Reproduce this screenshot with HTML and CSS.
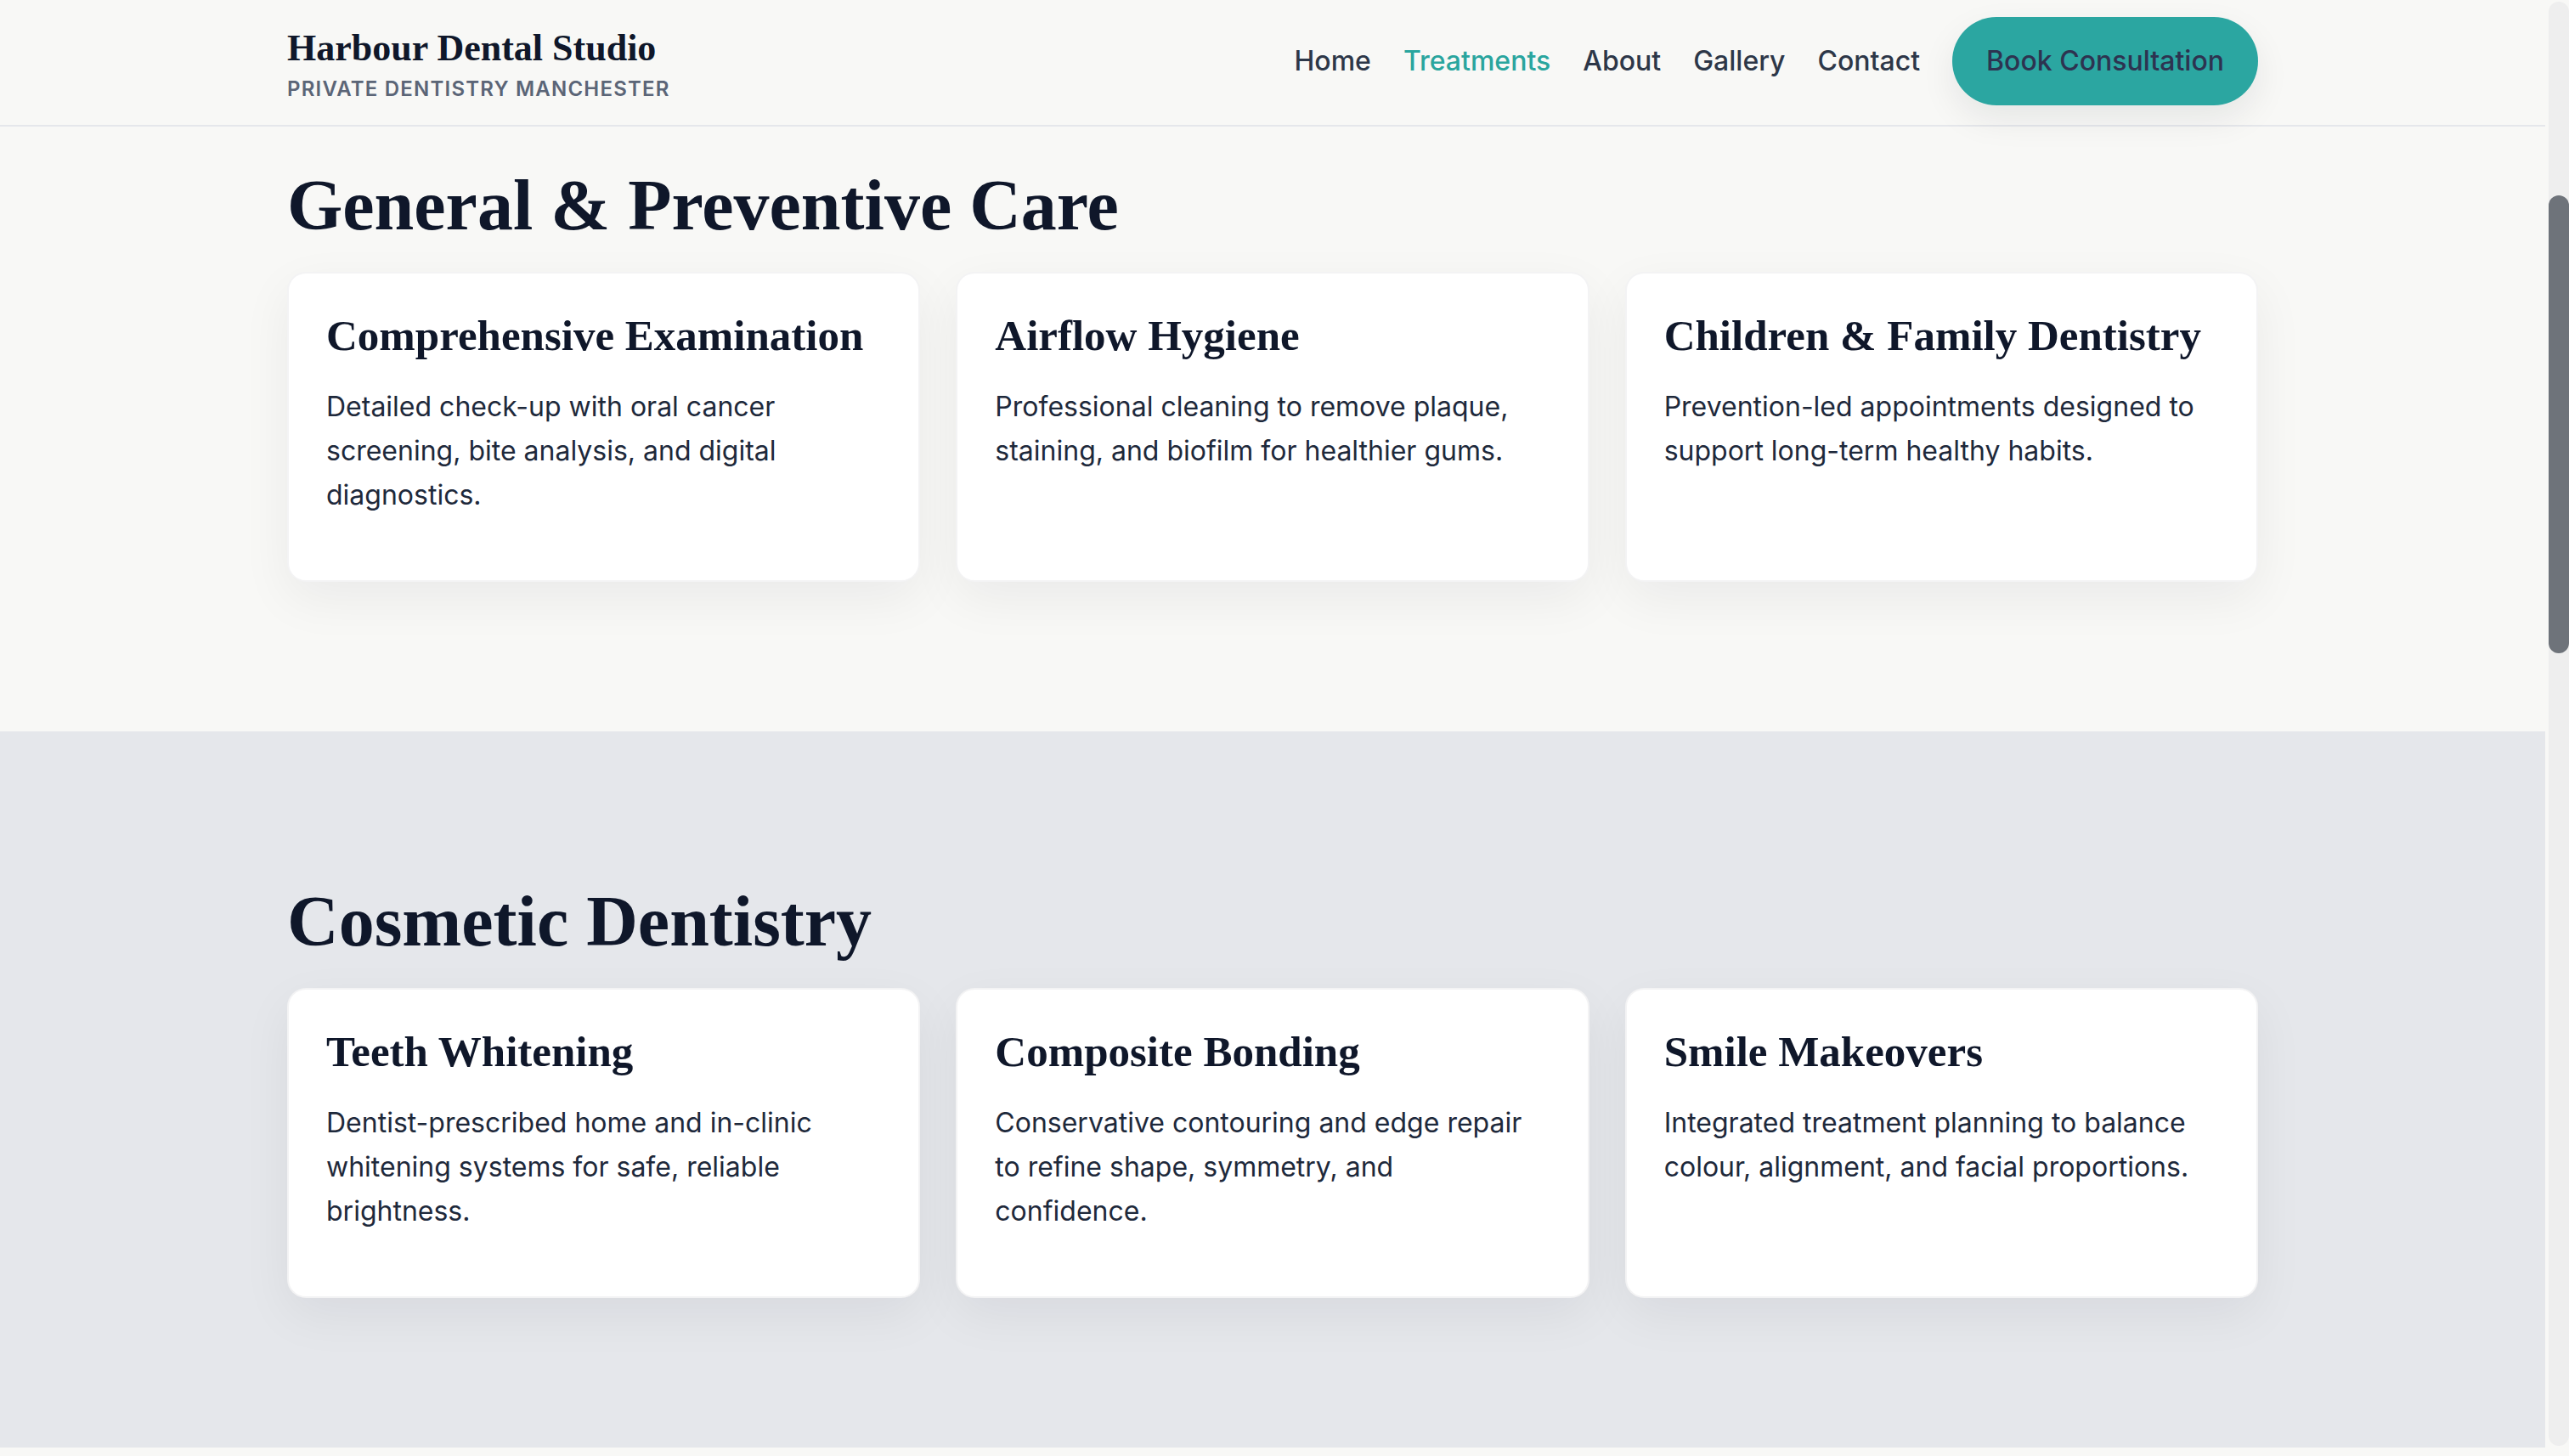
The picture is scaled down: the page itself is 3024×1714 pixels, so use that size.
FILE: index.html
```html
<!DOCTYPE html>
<html lang="en">
<head>
<meta charset="utf-8">
<title>Treatments — Harbour Dental Studio</title>
<link rel="stylesheet" href="styles.css">
</head>
<body>
<header class="site-header">
  <div class="container header-inner">
    <a class="brand" href="#">
      <span class="brand-name">Harbour Dental Studio</span>
      <span class="brand-tag">Private Dentistry Manchester</span>
    </a>
    <nav class="main-nav">
      <a href="#">Home</a>
      <a href="#" class="active">Treatments</a>
      <a href="#">About</a>
      <a href="#">Gallery</a>
      <a href="#">Contact</a>
      <a href="#" class="btn-book">Book Consultation</a>
    </nav>
  </div>
</header>
<main>
  <section class="group group-general">
    <div class="container">
      <h2 class="group-title">General &amp; Preventive Care</h2>
      <div class="card-grid">
        <article class="card">
          <h3 class="card-title">Comprehensive Examination</h3>
          <p class="card-text">Detailed check-up with oral cancer screening, bite analysis, and digital diagnostics.</p>
        </article>
        <article class="card">
          <h3 class="card-title">Airflow Hygiene</h3>
          <p class="card-text">Professional cleaning to remove plaque, staining, and biofilm for healthier gums.</p>
        </article>
        <article class="card">
          <h3 class="card-title">Children &amp; Family Dentistry</h3>
          <p class="card-text">Prevention-led appointments designed to support long-term healthy habits.</p>
        </article>
      </div>
    </div>
  </section>
  <section class="group group-cosmetic">
    <div class="container">
      <h2 class="group-title">Cosmetic Dentistry</h2>
      <div class="card-grid">
        <article class="card">
          <h3 class="card-title">Teeth Whitening</h3>
          <p class="card-text">Dentist-prescribed home and in-clinic whitening systems for safe, reliable brightness.</p>
        </article>
        <article class="card">
          <h3 class="card-title">Composite Bonding</h3>
          <p class="card-text">Conservative contouring and edge repair to refine shape, symmetry, and confidence.</p>
        </article>
        <article class="card">
          <h3 class="card-title">Smile Makeovers</h3>
          <p class="card-text">Integrated treatment planning to balance colour, alignment, and facial proportions.</p>
        </article>
      </div>
    </div>
  </section>
</main>
<div class="page-scrollbar" aria-hidden="true"><div class="page-scrollbar-thumb"></div></div>
</body>
</html>
```

FILE: styles.css
```css
body {
  margin: 0 28px 0 0;
  background: #f8f8f6;
  font-family: Inter, "Noto Sans", "Liberation Sans", sans-serif;
  color: #1e293b;
}

.container {
  max-width: 2320px;
  margin: 0 auto;
}

/* Header */
.site-header {
  position: sticky;
  top: 0;
  z-index: 10;
  background: #f8f8f6;
  border-bottom: 2px solid #e5e7eb;
}

.header-inner {
  display: flex;
  align-items: center;
  justify-content: space-between;
  height: 144px;
  padding-bottom: 3px;
}

.brand {
  display: flex;
  flex-direction: column;
  padding-top: 6px;
  text-decoration: none;
}

.brand-name {
  font-family: "Liberation Serif", "Times New Roman", serif;
  font-weight: 700;
  font-size: 44px;
  line-height: 52px;
  color: #0f172a;
}

.brand-tag {
  margin-top: 8px;
  font-size: 24px;
  line-height: 28px;
  font-weight: 600;
  letter-spacing: 1.2px;
  text-transform: uppercase;
  color: #5b6577;
}

.main-nav {
  display: flex;
  align-items: center;
  gap: 38px;
}

.main-nav a {
  font-size: 32px;
  line-height: 48px;
  font-weight: 500;
  color: #2d3748;
  text-decoration: none;
}

.main-nav a.active {
  color: #2aa59e;
}

.main-nav a.btn-book {
  background: #2ba6a1;
  color: #2d3350;
  padding: 28px 40px;
  border-radius: 999px;
  box-shadow: 0 16px 40px rgba(15, 23, 42, 0.08);
}

/* Treatment groups */
.group-general {
  padding: 43px 0 176px;
}

.group-cosmetic {
  background: #e5e7eb;
  padding: 174px 0 176px;
}

.group-title {
  margin: 0 0 27px;
  font-family: "Liberation Serif", "Times New Roman", serif;
  font-size: 84px;
  line-height: 1.2;
  font-weight: 700;
  color: #0f172a;
}

.card-grid {
  display: grid;
  grid-template-columns: repeat(3, 1fr);
  gap: 42px;
}

.card {
  background: #ffffff;
  border: 2px solid rgba(15, 23, 42, 0.05);
  border-radius: 22px;
  padding: 46px 44px;
  box-shadow: 0 20px 60px rgba(15, 23, 42, 0.06);
}

.card-title {
  margin: 0 0 30px;
  font-family: "Liberation Serif", "Times New Roman", serif;
  font-size: 51px;
  line-height: 55px;
  font-weight: 700;
  color: #0f172a;
}

.card-text {
  margin: 0 0 28px;
  font-size: 32px;
  line-height: 52px;
  color: #1e293b;
}

/* Browser scrollbar as seen in the capture */
.page-scrollbar {
  position: fixed;
  top: 2px;
  right: 0;
  bottom: 12px;
  width: 24px;
  background: #eeeeee;
  border-radius: 12px;
  z-index: 20;
}

.page-scrollbar-thumb {
  position: absolute;
  top: 228px;
  left: 0;
  right: 0;
  height: 539px;
  background: #6e737a;
  border-radius: 12px;
}
```
